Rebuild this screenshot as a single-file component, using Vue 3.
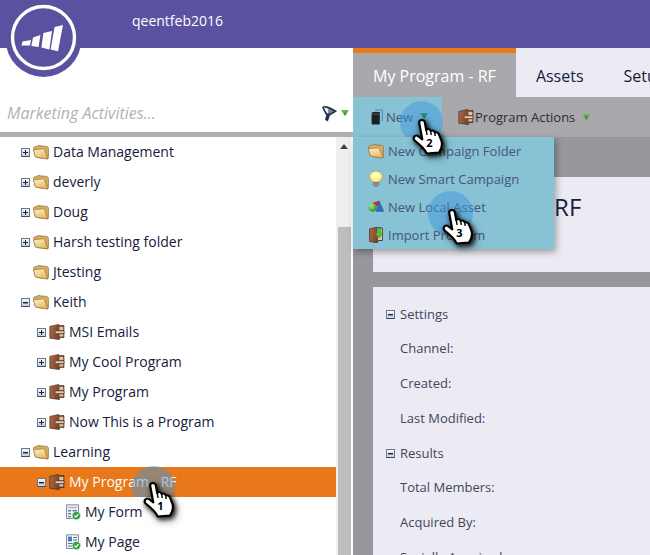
<script setup>
const treeRows = [
  { label: 'Data Management', depth: 0, toggle: 'plus', icon: 'folder' },
  { label: 'deverly', depth: 0, toggle: 'plus', icon: 'folder' },
  { label: 'Doug', depth: 0, toggle: 'plus', icon: 'folder' },
  { label: 'Harsh testing folder', depth: 0, toggle: 'plus', icon: 'folder' },
  { label: 'Jtesting', depth: 0, icon: 'folder' },
  { label: 'Keith', depth: 0, toggle: 'minus', icon: 'folder' },
  { label: 'MSI Emails', depth: 1, toggle: 'plus', icon: 'program' },
  { label: 'My Cool Program', depth: 1, toggle: 'plus', icon: 'program' },
  { label: 'My Program', depth: 1, toggle: 'plus', icon: 'program' },
  { label: 'Now This is a Program', depth: 1, toggle: 'plus', icon: 'program' },
  { label: 'Learning', depth: 0, toggle: 'minus', icon: 'folder' },
  { label: 'My Program - RF', depth: 1, toggle: 'minus', icon: 'program', selected: true },
  { label: 'My Form', depth: 2, icon: 'form' },
  { label: 'My Page', depth: 2, icon: 'page' }
]

const menuItems = [
  { label: 'New Campaign Folder', icon: 'folder' },
  { label: 'New Smart Campaign', icon: 'bulb' },
  { label: 'New Local Asset', icon: 'shapes' },
  { label: 'Import Program', icon: 'import' }
]

const details = [
  { label: 'Settings', heading: true },
  { label: 'Channel:' },
  { label: 'Created:' },
  { label: 'Last Modified:' },
  { label: 'Results', heading: true },
  { label: 'Total Members:' },
  { label: 'Acquired By:' },
  { label: 'Socially Acquired:' }
]

const hands = [1, 2, 3]
</script>

<template>
  <div class="page">
    <svg class="sprite" aria-hidden="true">
      <defs>
        <linearGradient id="folderFill" x1="0" y1="0" x2="0.4" y2="1">
          <stop offset="0" stop-color="#fff3c6" />
          <stop offset="1" stop-color="#e6bb68" />
        </linearGradient>
        <linearGradient id="bookFill" x1="0" y1="0" x2="1" y2="0.2">
          <stop offset="0" stop-color="#b06c42" />
          <stop offset="1" stop-color="#613720" />
        </linearGradient>
        <radialGradient id="bulbFill" cx="0.45" cy="0.35" r="0.7">
          <stop offset="0" stop-color="#fffff0" />
          <stop offset="0.7" stop-color="#fbf07a" />
          <stop offset="1" stop-color="#eec23c" />
        </radialGradient>
        <radialGradient id="ballFill" cx="0.35" cy="0.3" r="0.8">
          <stop offset="0" stop-color="#a4ec80" />
          <stop offset="1" stop-color="#17882a" />
        </radialGradient>
      </defs>
      <symbol id="folder" viewBox="0 0 16 16">
        <path d="M0.6 3.6 L5.6 1.4 L8.6 2 L13.6 2.4 C14.6 2.6 15.4 3.4 15.4 4.6 L15.4 13.4 C15.4 14.4 14.8 15 13.8 14.8 L3.6 13.4 C2.8 13.2 2.2 12.8 2 11.8 Z" fill="#d8ad5e" stroke="#8a6a36" stroke-width="0.7" />
        <path d="M0.4 5.8 L9.8 4.8 C10.8 4.7 11.3 5.1 11.6 6 L15 14.9 L3.6 13.4 C2.8 13.2 2.2 12.8 2 11.8 Z" fill="url(#folderFill)" stroke="#93723a" stroke-width="0.7" />
      </symbol>
      <symbol id="program" viewBox="0 0 16 16">
        <path d="M0.8 2.4 L9.6 0.4 L10.4 1.6 L15 1.6 L15 13.6 L10.4 13.6 L10.4 15.6 L0.8 14.2 Z" fill="url(#bookFill)" stroke="#3f2212" stroke-width="0.6" />
        <path d="M10.4 2.8 L14.4 2.8 L14.4 6.2 L10.4 6.2 Z M10.4 10.2 L14.4 10.2 L14.4 12.6 L10.4 12.6 Z" fill="#d9c3ad" />
        <path d="M6.2 7 L15 7 L15 9.4 L6.2 9.4 Z" fill="#e6dacd" stroke="#5a3420" stroke-width="0.6" />
      </symbol>
      <symbol id="form" viewBox="0 0 16 16">
        <path d="M1.5 0.8 H13.5 V14.5 H1.5 Z" fill="#f4f6fa" stroke="#7f8a9c" />
        <path d="M3 2.6 H12 V4.4 H3 Z" fill="#a9b9cf" />
        <path d="M3 6 H6 V7.6 H3 Z M7.5 6 H12 V7.6 H7.5 Z M3 9 H6 V10.6 H3 Z M3 12 H6 V13.2 H3 Z" fill="#5d7da6" />
        <circle cx="11.4" cy="11.6" r="4.2" fill="#35a040" stroke="#e9f3ea" stroke-width="0.6" />
        <path d="M9.4 11.6 L11 13.1 L13.4 10.2" fill="none" stroke="#fff" stroke-width="1.3" />
      </symbol>
      <symbol id="page" viewBox="0 0 16 16">
        <path d="M1.5 0.8 H13.5 V14.5 H1.5 Z" fill="#f4f6fa" stroke="#7f8a9c" />
        <path d="M3 2.6 H7 V7.4 H3 Z" fill="#3f7fd0" />
        <path d="M8.2 3 H12 V4 H8.2 Z M8.2 5.6 H12 V6.6 H8.2 Z M3 9 H8 V10 H3 Z M3 11.6 H7 V12.6 H3 Z" fill="#5d6f88" />
        <circle cx="11.4" cy="11.6" r="4.2" fill="#35a040" stroke="#e9f3ea" stroke-width="0.6" />
        <path d="M9.4 11.6 L11 13.1 L13.4 10.2" fill="none" stroke="#fff" stroke-width="1.3" />
      </symbol>
      <symbol id="funnel" viewBox="0 0 16 17">
        <path d="M0.6 1.6 C4 0.2 7 1 15.4 6 C13.4 7.6 10 8.6 7.8 11 L6 16.4 L3.8 15.2 L4.8 10.4 C3 7.6 1.6 4.6 0.6 1.6 Z" fill="#1f2c44" stroke="#1a2438" stroke-width="0.8" />
        <path d="M2 2 C4.4 1.8 7.6 3.4 10.6 5.6 C8.6 6 6.8 7.4 5.6 8.8 C4.2 6.6 3 4.2 2 2 Z" fill="#e8eef6" />
        <path d="M6.4 3.8 C8.4 4.4 11 5.8 13 6.2 C11 7.2 8.8 8 7 9.6 Z" fill="#6e84a6" />
      </symbol>
      <symbol id="bookNew" viewBox="0 0 12 16">
        <path d="M5 2.8 V1.2 H11.4 V12" fill="none" stroke="#4c96cf" stroke-width="1.2" />
        <path d="M0.6 5 C0.6 3.7 1.4 3 2.6 3 H8.8 V14.4 C8.8 15 8.4 15.4 7.8 15.4 H1.6 C1 15.4 0.6 15 0.6 14.4 Z" fill="#1c2024" />
        <path d="M1 5.2 H8.6" stroke="#66707a" stroke-width="0.7" />
      </symbol>
      <symbol id="bulb" viewBox="0 0 16 16">
        <path d="M8 0.2 C11.8 0.2 14.4 2.8 14.4 5.8 C14.4 8.2 11.6 9.4 11 11.4 H5 C4.4 9.4 1.6 8.2 1.6 5.8 C1.6 2.8 4.2 0.2 8 0.2 Z" fill="url(#bulbFill)" stroke="#c09a30" stroke-width="0.6" />
        <path d="M5.4 11.6 H10.6 V14 L9 15.8 H7 L5.4 14 Z" fill="#8c8f96" stroke="#5a5d64" stroke-width="0.5" />
      </symbol>
      <symbol id="shapes" viewBox="0 0 16 16">
        <path d="M5 3.4 L11.5 1.8 L12 5.4 L7 8 Z" fill="#d8262c" />
        <path d="M11.4 2.4 L15.8 12.4 L8 12.4 Z" fill="#2f6fc0" stroke="#1b4a8a" stroke-width="0.4" />
        <circle cx="4.6" cy="8.6" r="4.2" fill="url(#ballFill)" />
      </symbol>
      <symbol id="import" viewBox="0 0 16 16">
        <path d="M1.5 1.8 L9 0.2 L14.4 1 V13.4 L9.5 13.8 V16 L1.5 14.4 Z" fill="url(#bookFill)" stroke="#3f2212" stroke-width="0.6" />
        <path d="M9 1.4 H14 V13 H10 Z" fill="#d9c3ad" />
        <path d="M9.4 1 H12.8 V6 H15.4 L11.1 11 L6.8 6 H9.4 Z" fill="#58c040" stroke="#2e8a2a" stroke-width="0.5" />
      </symbol>
      <symbol id="hand" viewBox="0 0 32 38" preserveAspectRatio="none">
        <path d="M9 1 C10.6 1 11.6 2 11.8 3.6 L13 11 C14.4 9.4 16.6 10 17 12 C18.2 10.8 20.4 11.6 20.8 13.6 C22.2 12.8 24.2 13.8 24.8 15.8 L27 22 C28 26 27 30 24.6 33.6 L13.4 34.4 C11.6 30 8 26.4 2.4 21.6 C0.4 19.4 2.4 15.4 5.4 17 L9.4 20.4 L6.6 3.8 C6.4 2 7.4 1 9 1 Z" fill="#fff" stroke="#000" stroke-width="2" stroke-linejoin="round" />
        <path d="M13 11 L13.8 16 M17 12 L17.6 16 M20.8 13.6 L21.2 17" fill="none" stroke="#000" stroke-width="1.3" />
      </symbol>
    </svg>

    <header class="top-bar">
      <span class="account">qeentfeb2016</span>
    </header>

    <svg class="logo" viewBox="0 0 88 80" aria-label="Marketo">
      <circle cx="43.5" cy="39" r="38" fill="#5a52a0" />
      <circle cx="43.5" cy="37.5" r="31" fill="none" stroke="#fff" stroke-width="3.4" />
      <path d="M22.5 41.5 L31 40 L30 45.5 L21.5 45.5 Z M33 37.5 L40.4 35 L38.6 47 L31.4 46 Z M43.4 33 L52 31 L49.4 49.4 L41.4 47.4 Z M54.6 27 L63 25 L58 51.2 L50.6 49.6 Z" fill="#fff" />
    </svg>

    <div class="workspace">
      <aside class="sidebar">
        <div class="search">
          <span class="search-label">Marketing Activities...</span>
          <svg class="funnel"><use href="#funnel" /></svg>
          <span class="arrow"></span>
        </div>
        <div class="tree-wrap">
          <div class="tree">
            <div
              v-for="row in treeRows"
              :key="row.label"
              class="tree-row"
              :class="['depth-' + row.depth, { selected: row.selected }]"
            >
              <span class="toggle-slot">
                <span v-if="row.toggle" class="toggle" :class="row.toggle"></span>
              </span>
              <svg class="tree-icon"><use :href="'#' + row.icon" /></svg>
              <span class="tree-label">{{ row.label }}</span>
              <span v-if="row.selected" class="spot spot-tree"></span>
            </div>
          </div>
          <div class="scroll">
            <span class="scroll-up"></span>
            <span class="scroll-thumb"></span>
          </div>
        </div>
      </aside>

      <main class="content">
        <div class="tabs">
          <div class="tab active">My Program - RF</div>
          <div class="tab">Assets</div>
          <div class="tab">Setup</div>
        </div>

        <div class="toolbar">
          <div class="tool tool-new">
            <svg class="icon-new"><use href="#bookNew" /></svg>
            <span>New</span>
            <span class="spot spot-new"></span>
            <span class="arrow arrow-new"></span>
            <ul class="menu">
              <li v-for="item in menuItems" :key="item.label" class="menu-item">
                <svg class="menu-icon"><use :href="'#' + item.icon" /></svg>
                <span>{{ item.label }}</span>
              </li>
            </ul>
            <span class="spot spot-menu"></span>
          </div>
          <div class="tool tool-actions">
            <svg class="tree-icon"><use href="#program" /></svg>
            <span>Program Actions</span>
            <span class="arrow arrow-actions"></span>
          </div>
        </div>

        <div class="panels">
          <section class="panel title-panel">
            <h1>My Program - RF</h1>
          </section>
          <section class="panel detail-panel">
            <div
              v-for="row in details"
              :key="row.label"
              class="detail-row"
            >
              <span v-if="row.heading" class="toggle minus detail-toggle"></span>
              {{ row.label }}
            </div>
          </section>
        </div>
      </main>
    </div>

    <div v-for="n in hands" :key="n" class="hand" :class="'hand-' + n">
      <svg class="hand-svg"><use href="#hand" /></svg>
      <span class="hand-num">{{ n }}</span>
    </div>
  </div>
</template>

<style>
html,
body {
  margin: 0;
  overflow: hidden;
}
</style>

<style scoped>
.page {
  position: relative;
  width: 650px;
  height: 555px;
  overflow: hidden;
  background: #fff;
  font-family: "Open Sans", "Liberation Sans", sans-serif;
  font-size: 14px;
  color: #16203c;
}

.sprite {
  position: absolute;
  width: 0;
  height: 0;
}

.top-bar {
  height: 48px;
  padding-left: 132px;
  background: #5a52a0;
  color: #fff;
  line-height: 42px;
}

.logo {
  position: absolute;
  left: 0;
  top: 0;
  width: 88px;
  height: 80px;
}

.workspace {
  display: flex;
  height: 507px;
}

.sidebar {
  width: 353px;
  flex-shrink: 0;
  display: flex;
  flex-direction: column;
}

.search {
  height: 38px;
  padding: 46px 4px 0 7px;
  display: flex;
  align-items: center;
  border-bottom: 5px solid #b0afb4;
}

.search-label {
  flex: 1;
  font-size: 16px;
  font-style: italic;
  color: #b3b0b3;
}

.funnel {
  width: 15px;
  height: 17px;
  margin-right: 4px;
}

.arrow {
  flex-shrink: 0;
  width: 8px;
  height: 6px;
  background: linear-gradient(#6fbf55, #2c7a26);
  clip-path: polygon(0 0, 100% 0, 50% 100%);
}

.tree-wrap {
  flex: 1;
  min-height: 0;
  display: flex;
  padding-right: 2px;
}

.tree {
  width: 336px;
  flex-shrink: 0;
  overflow: hidden;
}

.tree-row {
  position: relative;
  height: 30px;
  display: flex;
  align-items: center;
  background: #fff;
  white-space: nowrap;
}

.tree-label {
  margin-top: -2px;
}

.depth-0 { padding-left: 21px; }
.depth-1 { padding-left: 37px; }
.depth-2 { padding-left: 53px; }

.tree-row.selected {
  background: #e8781a;
  color: #fff;
}

.tree-row.selected + .tree-row {
  z-index: 1;
}

.toggle-slot {
  width: 12px;
  flex-shrink: 0;
}

.toggle {
  position: relative;
  display: block;
  width: 7px;
  height: 7px;
  border: 1px solid #66778e;
  border-bottom-color: #3c4c64;
  background: linear-gradient(#f6f8fb, #c6d0de);
}

.toggle::before {
  content: "";
  position: absolute;
  left: 1px;
  top: 3px;
  width: 5px;
  height: 1px;
  background: #16233c;
}

.toggle.minus::before {
  box-shadow: 0 1px 0 rgba(22, 35, 60, 0.45);
}

.toggle.plus::after {
  content: "";
  position: absolute;
  left: 3px;
  top: 1px;
  width: 1px;
  height: 5px;
  background: #16233c;
}

.tree-icon {
  width: 16px;
  height: 16px;
  margin-right: 4px;
  flex-shrink: 0;
}

.scroll {
  width: 15px;
  display: flex;
  flex-direction: column;
  background: #efefef;
}

.scroll-up {
  width: 0;
  height: 0;
  margin: 7px 0 0 4px;
  border-left: 4px solid transparent;
  border-right: 4px solid transparent;
  border-bottom: 5px solid #444;
}

.scroll-thumb {
  margin: auto 0 0 2px;
  height: 328px;
  background: #bdbdbd;
}

.content {
  flex: 1;
  min-width: 0;
  display: flex;
  flex-direction: column;
}

.tabs {
  display: flex;
  height: 49px;
  flex-shrink: 0;
  background: #ecebf3;
  overflow: hidden;
}

.tab {
  padding: 5px 20px 0;
  font-size: 16px;
  line-height: 46px;
  white-space: nowrap;
}

.tab.active {
  background: #a9a8ad;
  border-top: 5px solid #e8781a;
  padding-top: 0;
  color: #fff;
}

.toolbar {
  display: flex;
  height: 40px;
  flex-shrink: 0;
  background: #a9a8ad;
  font-size: 13px;
}

.tool {
  display: flex;
  align-items: center;
  white-space: nowrap;
}

.tool-new {
  position: relative;
  width: 89px;
  padding-left: 18px;
  box-sizing: border-box;
  background: #88c2d5;
  color: #40506f;
}

.icon-new {
  width: 12px;
  height: 16px;
  margin-right: 3px;
}

.arrow-new {
  position: relative;
  z-index: 1;
  margin-left: 7px;
  margin-top: -2px;
  background: linear-gradient(#2f9c7c, #1f6f66);
}

.tool-actions {
  padding-left: 16px;
  color: #2c2c3a;
}

.tool-actions .tree-icon {
  margin-right: 1px;
}

.arrow-actions {
  margin-left: 7px;
}

.menu {
  position: absolute;
  z-index: 3;
  left: 0;
  top: 40px;
  width: 201px;
  margin: 0;
  padding: 0;
  list-style: none;
  background: #88c2d5;
  box-shadow: 2px 3px 7px rgba(0, 0, 0, 0.35);
}

.menu-item {
  display: flex;
  align-items: center;
  height: 28px;
  padding-left: 15px;
  color: #46557a;
}

.menu-icon {
  width: 16px;
  height: 16px;
  margin-right: 4px;
}

.spot {
  position: absolute;
  width: 43px;
  height: 43px;
  border-radius: 50%;
  background: rgba(60, 150, 220, 0.48);
}

.spot-tree {
  left: 132px;
  top: -1px;
}

.spot-new {
  left: 47px;
  top: 4px;
}

.spot-menu {
  z-index: 4;
  left: 75px;
  top: 94px;
  width: 45px;
  height: 45px;
}

.panels {
  flex: 1;
  min-height: 0;
  padding: 40px 0 0 20px;
  background: #98979c;
}

.panel {
  background: #ecebf3;
}

.title-panel {
  height: 95px;
  margin-bottom: 15px;
  padding: 14px 0 0 24px;
  box-sizing: border-box;
}

.title-panel h1 {
  margin: 0;
  font-size: 24px;
  font-weight: 400;
  line-height: 32px;
  color: #16203c;
}

.detail-panel {
  height: 268px;
  padding: 9.6px 0 0 27px;
  box-sizing: border-box;
  font-size: 13px;
  color: #40465c;
}

.detail-row {
  position: relative;
  height: 34.75px;
  line-height: 34.75px;
}

.detail-toggle {
  position: absolute;
  left: -14px;
  top: 13px;
}

.hand {
  position: absolute;
  z-index: 5;
  width: 35px;
  height: 38px;
}

.hand-svg {
  display: block;
  width: 35px;
  height: 38px;
  filter: drop-shadow(2px 2px 2px rgba(0, 0, 0, 0.75)) drop-shadow(1px 2px 3px rgba(0, 0, 0, 0.5));
}

.hand-num {
  position: absolute;
  left: 0;
  right: 0;
  top: 17px;
  text-align: center;
  font-size: 11px;
  font-weight: 700;
  line-height: 14px;
  color: #000;
}

.hand-1 { left: 143px; top: 482px; }
.hand-2 { left: 412px; top: 119px; }
.hand-3 { left: 442px; top: 209px; }
</style>
